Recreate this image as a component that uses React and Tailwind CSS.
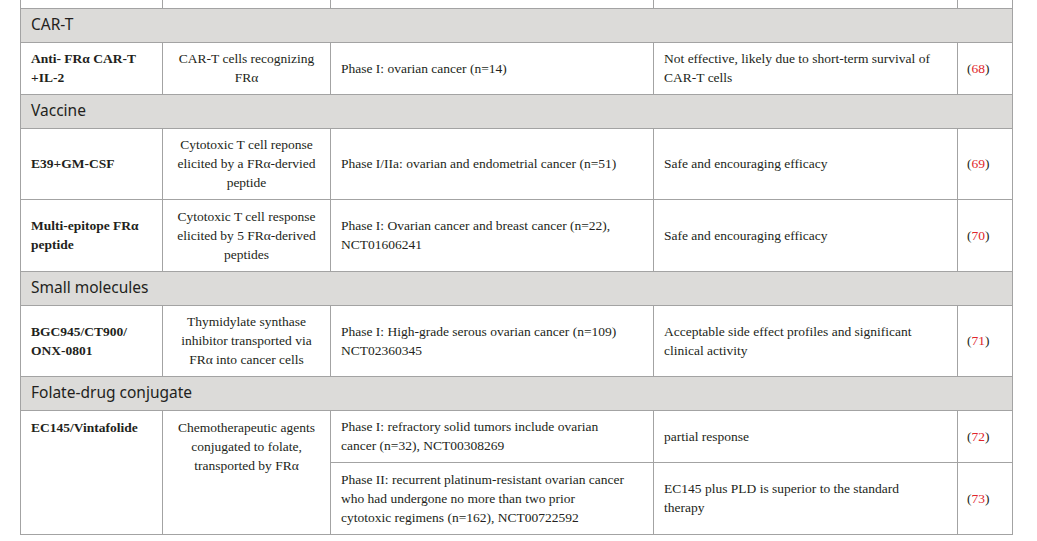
import React from "react";

const serif = { fontFamily: '"Liberation Serif", "Times New Roman", serif' };

function Ref({ n }) {
  return (
    <span>
      (<span className="text-[#e0252b]">{n}</span>)
    </span>
  );
}

function Header({ children }) {
  return (
    <tr className="h-[34px]">
      <td
        colSpan={5}
        className="border border-[#a3a3a3] bg-[#dcdbd9] pl-[10px] pb-[1px] align-middle text-[15.5px] text-[#231f20] font-['Noto_Sans',sans-serif]"
      >
        {children}
      </td>
    </tr>
  );
}

const cell = "border border-[#a3a3a3] align-middle";

export default function App() {
  return (
    <div className="bg-white w-[1037px] h-[541px] overflow-hidden" style={serif}>
      <table className="ml-[20px] w-[992px] table-fixed border-collapse text-[13.5px] leading-[19px] text-[#231f20]">
        <colgroup>
          <col className="w-[142px]" />
          <col className="w-[168px]" />
          <col className="w-[323px]" />
          <col className="w-[304px]" />
          <col className="w-[55px]" />
        </colgroup>
        <tbody>
          <tr className="h-[8px]">
            <td className={cell + " border-t-0"}></td>
            <td className={cell + " border-t-0"}></td>
            <td className={cell + " border-t-0"}></td>
            <td className={cell + " border-t-0"}></td>
            <td className={cell + " border-t-0"}></td>
          </tr>
          <Header>CAR-T</Header>
          <tr className="h-[52px]">
            <td className={cell + " pl-[10px] font-bold"}>
              Anti- FRα CAR-T<br />+IL-2
            </td>
            <td className={cell + " text-center"}>
              CAR-T cells recognizing<br />FRα
            </td>
            <td className={cell + " pl-[10px]"}>Phase I: ovarian cancer (n=14)</td>
            <td className={cell + " pl-[10px]"}>
              Not effective, likely due to short-term survival of<br />CAR-T cells
            </td>
            <td className={cell + " pl-[9px]"}>
              <Ref n="68" />
            </td>
          </tr>
          <Header>Vaccine</Header>
          <tr className="h-[71px]">
            <td className={cell + " pl-[10px] font-bold"}>E39+GM-CSF</td>
            <td className={cell + " text-center"}>
              Cytotoxic T cell reponse<br />elicited by a FRα-dervied<br />peptide
            </td>
            <td className={cell + " pl-[10px]"}>
              Phase I/IIa: ovarian and endometrial cancer (n=51)
            </td>
            <td className={cell + " pl-[10px]"}>Safe and encouraging efficacy</td>
            <td className={cell + " pl-[9px]"}>
              <Ref n="69" />
            </td>
          </tr>
          <tr className="h-[72px]">
            <td className={cell + " pl-[10px] font-bold"}>
              Multi-epitope FRα<br />peptide
            </td>
            <td className={cell + " text-center"}>
              Cytotoxic T cell response<br />elicited by 5 FRα-derived<br />peptides
            </td>
            <td className={cell + " pl-[10px]"}>
              Phase I: Ovarian cancer and breast cancer (n=22),<br />NCT01606241
            </td>
            <td className={cell + " pl-[10px]"}>Safe and encouraging efficacy</td>
            <td className={cell + " pl-[9px]"}>
              <Ref n="70" />
            </td>
          </tr>
          <Header>Small molecules</Header>
          <tr className="h-[71px]">
            <td className={cell + " pl-[10px] font-bold"}>
              BGC945/CT900/<br />ONX-0801
            </td>
            <td className={cell + " text-center"}>
              Thymidylate synthase<br />inhibitor transported via<br />FRα into cancer cells
            </td>
            <td className={cell + " pl-[10px]"}>
              Phase I: High-grade serous ovarian cancer (n=109)<br />NCT02360345
            </td>
            <td className={cell + " pl-[10px]"}>
              Acceptable side effect profiles and significant<br />clinical activity
            </td>
            <td className={cell + " pl-[9px]"}>
              <Ref n="71" />
            </td>
          </tr>
          <Header>Folate-drug conjugate</Header>
          <tr className="h-[52px]">
            <td rowSpan={2} className={cell + " !align-top pt-[7px] pl-[10px] font-bold"}>
              EC145/Vintafolide
            </td>
            <td rowSpan={2} className={cell + " !align-top pt-[7px] text-center"}>
              Chemotherapeutic agents<br />conjugated to folate,<br />transported by FRα
            </td>
            <td className={cell + " pl-[10px]"}>
              Phase I: refractory solid tumors include ovarian<br />cancer (n=32), NCT00308269
            </td>
            <td className={cell + " pl-[10px]"}>partial response</td>
            <td className={cell + " pl-[9px]"}>
              <Ref n="72" />
            </td>
          </tr>
          <tr className="h-[72px]">
            <td className={cell + " pl-[10px]"}>
              Phase II: recurrent platinum-resistant ovarian cancer<br />who had undergone no more than two prior<br />cytotoxic regimens (n=162), NCT00722592
            </td>
            <td className={cell + " pl-[10px]"}>
              EC145 plus PLD is superior to the standard<br />therapy
            </td>
            <td className={cell + " pl-[9px]"}>
              <Ref n="73" />
            </td>
          </tr>
        </tbody>
      </table>
    </div>
  );
}
